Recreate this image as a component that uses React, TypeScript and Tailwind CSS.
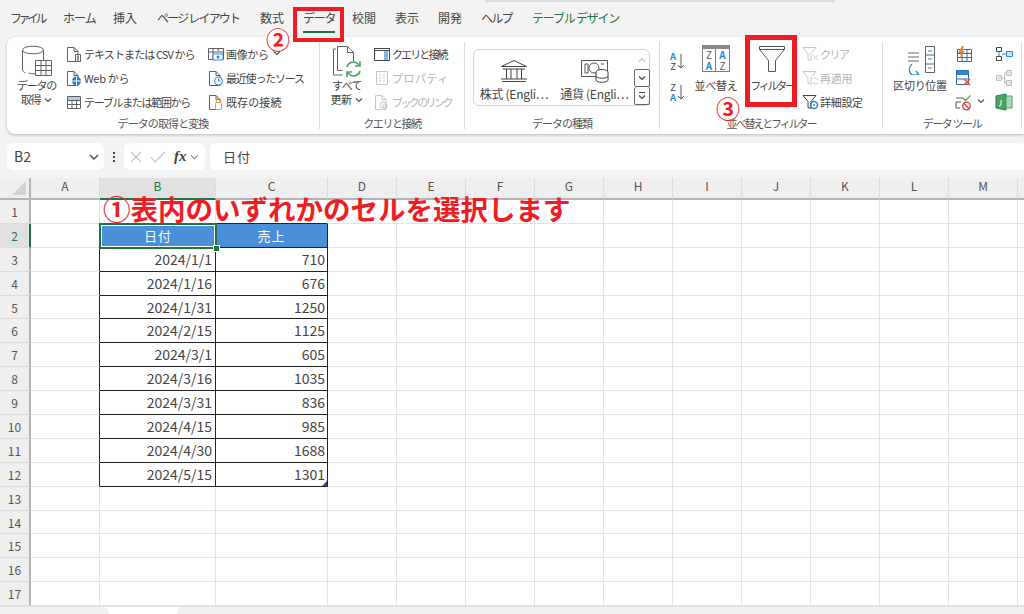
import { ReactNode } from "react";

const tabs = [
    { t: "ファイル", c: "tracking-[-3.5px]", w: "w-[53px]" },
    { t: "ホーム", c: "tracking-[-1px]", w: "w-[50px]" },
    { t: "挿入", c: "", w: "w-[44px]" },
    { t: "ページ レイアウト", c: "tracking-[-1.8px]", w: "w-[103px]" },
    { t: "数式", c: "", w: "w-[43px]" },
    { t: "データ", c: "tracking-[-1.3px]", w: "w-[49px]" },
    { t: "校閲", c: "", w: "w-[43px]" },
    { t: "表示", c: "", w: "w-[43px]" },
    { t: "開発", c: "", w: "w-[43px]" },
    { t: "ヘルプ", c: "tracking-[-1.7px]", w: "w-[51px]" },
];
const cols = ["A", "B", "C", "D", "E", "F", "G", "H", "I", "J", "K", "L", "M", ""];
const data = [
    ["2024/1/1", "710"],
    ["2024/1/16", "676"],
    ["2024/1/31", "1250"],
    ["2024/2/15", "1125"],
    ["2024/3/1", "605"],
    ["2024/3/16", "1035"],
    ["2024/3/31", "836"],
    ["2024/4/15", "985"],
    ["2024/4/30", "1688"],
    ["2024/5/15", "1301"],
];

const Svg = ({ w, h, children }: { w: number; h: number; children: ReactNode }) => (
    <svg width={w} height={h} viewBox={`0 0 ${w} ${h}`} fill="none" stroke="#606060" strokeWidth="1" className="shrink-0">
        {children}
    </svg>
);

const Doc = ({ c = "#606060" }: { c?: string }) => <path d="M1.5 1.5h6.5l4 4v10h-10.500z M8 1.500v4h4" stroke={c} />;

const Chevron = () => (
    <svg width="8" height="6" viewBox="0 0 8 6" fill="none" stroke="#555" strokeWidth="1.2" className="inline-block ml-1 mb-[2px]">
        <path d="M1 1.500l3 3 3-3" />
    </svg>
);

const Icons: Record<string, ReactNode> = {
    text: <Svg w={16} h={16}><Doc /><path d="M9.500 8.500h5v7h-5z M11 11h2M11 13h2" /></Svg>,
    web: <Svg w={16} h={16}><Doc /><circle cx="10.500" cy="11" r="4.500" fill="#2b7cd3" stroke="none" /><path d="M6 11h9M10.500 6.500v9" stroke="#fff" /></Svg>,
    table: <Svg w={16} h={16}><path d="M1.500 2.500h13v12h-13z M1.500 6.500h13M1.500 10.500h13M6 6.500v8M10.500 6.500v8" /><path d="M2 3h12v3h-12z" fill="#a8cdee" stroke="none" /></Svg>,
    image: <Svg w={16} h={16}><path d="M.5 2.500h15v11h-15z M.5 6h15M5 2.500v11M10 2.500v3" /><path d="M5 8h10v6h-10z" fill="#fff" stroke="#2b88d8" /><circle cx="10" cy="11" r="1.500" fill="#2b88d8" stroke="none" /></Svg>,
    recent: <Svg w={16} h={16}><Doc /><circle cx="10.500" cy="11" r="4" fill="#fff" stroke="#2b88d8" /><path d="M10.500 8.500v2.500h2" stroke="#2b88d8" /></Svg>,
    conn: <Svg w={16} h={16}><Doc /><rect x="7.500" y="8.500" width="6" height="7" rx="1" fill="#fff" stroke="#e8963a" /><path d="M8.500 8v-1.500a2 2 0 0 1 4 0v1.500" stroke="#e8963a" /></Svg>,
    query: <Svg w={16} h={16}><path d="M.5 2.500h15v12h-15z" stroke="#444" /><path d="M.5 2.500h15v2h-15z" stroke="#444" /><path d="M10 5h4v9h-4z" fill="#7cb8ea" stroke="none" /></Svg>,
    prop: <Svg w={16} h={16}><path d="M2.500 1.500h11v13h-11z M5 5h2M9 5h2M5 8h2M9 8h2M5 11h2M9 11h2" stroke="#c8c8c8" /></Svg>,
    link: <Svg w={16} h={16}><Doc c="#c8c8c8" /><circle cx="9" cy="11" r="3" stroke="#c8c8c8" /><circle cx="11" cy="12" r="2" stroke="#c8c8c8" /></Svg>,
    clear: <Svg w={18} h={16}><path d="M1 1.500h13l-5 6v7l-3-1v-6z" stroke="#c8c8c8" /><path d="M11 9l5 5M16 9l-5 5" stroke="#c8c8c8" /></Svg>,
    reapply: <Svg w={18} h={16}><path d="M1 1.500h13l-5 6v7l-3-1v-6z" stroke="#c8c8c8" /><path d="M11 9a3 3 0 0 1 5 1M16 13a3 3 0 0 1-5-1" stroke="#c8c8c8" /></Svg>,
    adv: <Svg w={18} h={16}><path d="M1 1.500h13l-5 6v7l-3-1v-6z" stroke="#444" /><circle cx="12" cy="11" r="3.500" stroke="#2b88d8" strokeWidth="1.600" /><circle cx="12" cy="11" r="1" fill="#2b88d8" stroke="none" /></Svg>,
    flash: <Svg w={18} h={16}><path d="M2.500 3.500h14v12h-14z M2.500 7.500h14M2.500 11.500h14M7 3.500v12M12 3.500v12" stroke="#2b6cb0" /><path d="M7 0l-4 7h3l-1 5 5-7h-3l2-5z" fill="#e8832a" stroke="none" /></Svg>,
    dedupe: <Svg w={18} h={18}><path d="M1.500 1.500h12v14h-12z" stroke="#2b6cb0" fill="#fff" /><path d="M2 2h11v4h-11z" fill="#2b88d8" stroke="none" /><path d="M2 10h11" stroke="#2b6cb0" /><path d="M9 10l6 6M15 10l-6 6" stroke="#e2504c" strokeWidth="1.500" /></Svg>,
    valid: <Svg w={18} h={18}><path d="M1 5h7M1 9h5M1 9v6h4M1 5v0" stroke="#555" /><path d="M8 5l2.500 2.500 5-5" stroke="#57a64a" strokeWidth="1.300" /><circle cx="11.500" cy="13" r="3.800" stroke="#d83b3b" strokeWidth="1.300" /><path d="M9 10.500l5 5" stroke="#d83b3b" strokeWidth="1.300" /></Svg>,
    merge: <Svg w={18} h={16}><path d="M1.500 1.500h5v4h-5zM1.500 10.500h5v4h-5z" stroke="#444" /><path d="M4 5.500v5M7 8h4" stroke="#2b88d8" /><path d="M11.500 5.500h6v5h-6z" stroke="#2b88d8" fill="#cfe4f7" /></Svg>,
    relation: <Svg w={18} h={18}><path d="M1.500 6.500h5v5h-5zM11.500 1.500h5v5h-5zM11.500 11.500h5v5h-5zM6.500 9h3M9.500 4v10h2M9.500 4h2" stroke="#c0c0c0" fill="#e6e6e6" /></Svg>,
    model: <Svg w={18} h={18}><path d="M1 3l10-2v16l-10-2z" fill="#4aa564" stroke="#2f7d49" /><path d="M11 3h6v12h-6z" fill="#a9d8b4" stroke="#4aa564" /><path d="M6 7v5l-2 1" stroke="#fff" /></Svg>,
};

const Item = ({ icon, label, off, tr = "" }: { icon: string; label: string; off?: boolean; tr?: string }) => (
    <div className={`h-[24px] flex items-center whitespace-nowrap ${off ? "text-[#b4b4b4]" : ""}`}>
        <span className="w-[18px] shrink-0 flex">{Icons[icon]}</span>
        <span className={tr}>{label}</span>
    </div>
);

const Group = ({ w, label, tr, children }: { w: string; label: string; tr: string; children: ReactNode }) => (
    <div className={`${w} my-[5px] shrink-0 flex flex-col border-r border-[#dcdcdc]`}>
        <div className="flex-1 flex min-h-0">{children}</div>
        <div className={`h-[11px] leading-[11px] text-center text-[#555] ${tr}`}>{label}</div>
    </div>
);

const BigBtn = ({ w, icon, lines, tr = "" }: { w: string; icon: ReactNode; lines: ReactNode[]; tr?: string }) => (
    <div className={`${w} shrink-0 flex flex-col items-center pt-[3px] leading-[14px] text-center`}>
        <div className="h-[33px] flex items-start justify-center">{icon}</div>
        {lines.map((l, i) => <div key={i} className={`whitespace-nowrap ${tr}`}>{l}</div>)}
    </div>
);

export default function App() {
    return (
        <div className="relative w-[1024px] h-[614px] overflow-hidden bg-[#f3f3f3] text-[#444] flex flex-col font-['Noto_Sans_CJK_JP','Noto_Sans',sans-serif] text-[11px] tracking-[-0.3px]">
            <div className="h-[2px] ml-[485px] w-[350px] bg-[#dcdcdc] shrink-0" />

            {/* tabs */}
            <div className="h-[35px] shrink-0 flex pl-[10px] text-[12px] text-[#444] tracking-normal">
                {tabs.map(({ t, c, w }) => (
                    <div key={t} className={`${w} shrink-0 h-[31px] flex items-center whitespace-nowrap`}>
                        <div className={`relative h-full flex items-center ${c}`}>
                            {t}
                            {t === "データ" && <div className="absolute left-0 right-0 bottom-0 h-[2px] bg-[#217346]" />}
                        </div>
                    </div>
                ))}
                <div className="h-[31px] flex items-center whitespace-nowrap text-[#217346] tracking-[-1.2px]">テーブル デザイン</div>
            </div>

            {/* ribbon */}
            <div className="h-[97px] ml-[7px] shrink-0 rounded-l-lg bg-white shadow-[0_1px_3px_rgba(0,0,0,0.25)] flex">
                <Group w="w-[313px]" label="データの取得と変換" tr="tracking-[-0.9px]">
                    <BigBtn
                        w="w-[59px]"
                        tr="tracking-[-1.2px]"
                        lines={["データの", <>取得<Chevron /></>]}
                        icon={
                            <Svg w={32} h={32}>
                                <path d="M1.500 5c0-5 21-5 21 0v20c0 3-10 5-15 3M1.500 5c0 5 21 5 21 0M1.500 5v20c0 1 1 2 3 3" />
                                <path d="M14.500 15.500h16v15h-16z M14.500 20.500h16M14.500 25.500h16M20 15.500v15M25 15.500v15" fill="#fff" />
                            </Svg>
                        }
                    />
                    <div className="w-[142px] shrink-0">
                        <Item icon="text" label="テキストまたは CSV から" tr="tracking-[-0.9px]" />
                        <Item icon="web" label="Web から" />
                        <Item icon="table" label="テーブルまたは範囲から" tr="tracking-[-1.3px]" />
                    </div>
                    <div>
                        <div className="h-[24px] flex items-center whitespace-nowrap">
                            <span className="w-[18px] flex">{Icons.image}</span>画像から<Chevron />
                        </div>
                        <Item icon="recent" label="最近使ったソース" tr="tracking-[-1.2px]" />
                        <Item icon="conn" label="既存の接続" tr="tracking-[0.1px]" />
                    </div>
                </Group>

                <Group w="w-[145px]" label="クエリと接続" tr="tracking-[-1.4px]">
                    <BigBtn
                        w="w-[54px]"
                        tr="tracking-[-0.6px]"
                        lines={["すべて", <>更新<Chevron /></>]}
                        icon={
                            <Svg w={30} h={32}>
                                <path d="M4 4h-2.500v26h9" />
                                <path d="M5.500 1.500h10l6 6v9M15.500 1.500v6h6M5.500 1.500v24h5" />
                                <path d="M15 22a6.500 6.500 0 0 1 11-3l2 2M28 26a6.500 6.500 0 0 1-11 3l-2-2" stroke="#4aa564" strokeWidth="1.600" />
                                <path d="M28 16v5h-5M15 32v-5h5" stroke="#4aa564" strokeWidth="1.600" />
                            </Svg>
                        }
                    />
                    <div>
                        <Item icon="query" label="クエリと接続" tr="tracking-[-1.9px]" />
                        <Item icon="prop" label="プロパティ" off tr="tracking-[0.5px]" />
                        <Item icon="link" label="ブックのリンク" off tr="tracking-[-2.6px]" />
                    </div>
                </Group>

                <Group w="w-[195px]" label="データの種類" tr="tracking-[-1px]">
                    <div className="ml-[8px] mt-[7px] w-[177px] h-[57px] rounded-md border border-[#d4d4d4] flex text-[12px] text-[#444]">
                        <div className="w-[80px] flex flex-col items-center pt-[9px]">
                            <div className="h-[26px]">
                                <Svg w={28} h={24}>
                                    <path d="M14 1.500l12.500 6h-25z M3 10h22M2 22.500h24M1 20h26M6.500 10v10M11 10v10M17 10v10M21.500 10v10" stroke="#444" />
                                </Svg>
                            </div>
                            <div className="whitespace-nowrap">株式 (Engli⋯</div>
                        </div>
                        <div className="w-[81px] flex flex-col items-center pt-[9px]">
                            <div className="h-[26px]">
                                <Svg w={30} h={24}>
                                    <path d="M1.500 1.500h26v16h-26z M5 5h3v9h-3z M21 5h3" stroke="#555" />
                                    <circle cx="14" cy="9" r="5" stroke="#555" />
                                    <ellipse cx="22" cy="13" rx="6" ry="2.500" fill="#fff" stroke="#444" />
                                    <path d="M16 13v8c0 3 12 3 12 0v-8M16 17c0 3 12 3 12 0" fill="#fff" stroke="#444" />
                                </Svg>
                            </div>
                            <div className="whitespace-nowrap">通貨 (Engli⋯</div>
                        </div>
                        <div className="w-[14px] flex flex-col text-[#555]">
                            <div className="h-[20px] flex items-center justify-center">
                                <svg width="8" height="6" viewBox="0 0 8 6" fill="none" stroke="#c4c4c4" strokeWidth="1.200"><path d="M1 4.500l3-3 3 3" /></svg>
                            </div>
                            <div className="h-[18px] border border-[#666] rounded-[2px] -mx-px flex items-center justify-center">
                                <svg width="8" height="6" viewBox="0 0 8 6" fill="none" stroke="#444" strokeWidth="1.200"><path d="M1 1.500l3 3 3-3" /></svg>
                            </div>
                            <div className="h-[19px] border border-t-0 border-[#666] rounded-[2px] -mx-px flex items-center justify-center">
                                <svg width="8" height="9" viewBox="0 0 8 9" fill="none" stroke="#444" strokeWidth="1.200"><path d="M1 1.500h6M1 4.500l3 3 3-3" /></svg>
                            </div>
                        </div>
                    </div>
                </Group>

                <Group w="w-[223px]" label="並べ替えとフィルター" tr="tracking-[-2.1px]">
                    <div className="w-[32px] shrink-0 pl-[10px] pt-[9px] flex flex-col gap-[11px]">
                        <div className="w-[20px] h-[20px] flex items-center gap-[1px] text-[9.5px] leading-[10px] text-center tracking-normal">
                            <div><div className="text-[#2b88d8] font-bold">A</div><div>Z</div></div>
                            <svg width="8" height="16" viewBox="0 0 8 16" fill="none" stroke="#555"><path d="M4 1v14M1 12l3 3 3-3" /></svg>
                        </div>
                        <div className="w-[20px] h-[20px] flex items-center gap-[1px] text-[9.5px] leading-[10px] text-center tracking-normal">
                            <div><div>Z</div><div className="text-[#2b88d8] font-bold">A</div></div>
                            <svg width="8" height="16" viewBox="0 0 8 16" fill="none" stroke="#555"><path d="M4 1v14M1 12l3 3 3-3" /></svg>
                        </div>
                    </div>
                    <BigBtn
                        w="w-[48px]"
                        lines={["並べ替え"]}
                        icon={
                            <div className="w-[28px] h-[27px] border border-[#777] border-t-[4px] border-t-[#888] grid grid-cols-2 text-[10px] leading-[11px] text-center tracking-normal text-[#555]">
                                <div className="border-r border-[#777]"><div>Z</div><div className="text-[#2b88d8] font-bold">A</div></div>
                                <div><div className="text-[#2b88d8] font-bold">A</div><div>Z</div></div>
                            </div>
                        }
                    />
                    <div className="ml-[2px] w-[60px]">
                        <BigBtn
                            w="w-[60px]"
                            tr="tracking-[-2.3px]"
                            lines={["フィルター"]}
                            icon={
                                <Svg w={28} h={28}>
                                    <path d="M1.500 1.500h25v3l-9 11v11h-7v-11l-9-11z M1.500 4.500h25" stroke="#555" fill="#fafafa" />
                                </Svg>
                            }
                        />
                    </div>
                    <div>
                        <Item icon="clear" label="クリア" off tr="tracking-[-1.5px]" />
                        <Item icon="reapply" label="再適用" off />
                        <Item icon="adv" label="詳細設定" />
                    </div>
                </Group>

                <Group w="w-[139px]" label="データ ツール" tr="tracking-[-1.4px]">
                    <div className="ml-[2px]">
                        <BigBtn
                            w="w-[70px]"
                            lines={["区切り位置"]}
                            icon={
                                <Svg w={32} h={30}>
                                    <path d="M4 8h11M4 12h11M4 16h11" />
                                    <path d="M21.500 1.500h9v26h-9z M21.500 10h9M21.500 19h9" />
                                    <path d="M24 6h4M24 14h4M24 23h4" stroke="#2b88d8" />
                                    <path d="M8 19a7 7 0 0 0 0 11M8 30h7M12 26l3 4-3 3" stroke="#2b88d8" strokeWidth="1.300" />
                                </Svg>
                            }
                        />
                    </div>
                    <div className="w-[40px] shrink-0">
                        <div className="h-[24px] flex items-center">{Icons.flash}</div>
                        <div className="h-[24px] flex items-center">{Icons.dedupe}</div>
                        <div className="h-[24px] flex items-center">{Icons.valid}<Chevron /></div>
                    </div>
                    <div>
                        <div className="h-[24px] flex items-center">{Icons.merge}</div>
                        <div className="h-[24px] flex items-center">{Icons.relation}</div>
                        <div className="h-[24px] flex items-center">{Icons.model}</div>
                    </div>
                </Group>
            </div>

            {/* formula bar */}
            <div className="h-[27px] mt-[9px] mb-[8px] shrink-0 flex items-stretch pl-[7px] gap-[5px] text-[14px] tracking-normal">
                <div className="w-[97px] rounded-md bg-white flex items-center justify-between pl-[7px] pr-[5px]">
                    B2
                    <svg width="10" height="6" viewBox="0 0 10 6" fill="none" stroke="#444" strokeWidth="1.300"><path d="M1 1l4 4 4-4" /></svg>
                </div>
                <div className="w-[10px] flex flex-col items-center justify-center gap-[2px]">
                    <div className="w-[2px] h-[2px] bg-[#444]" />
                    <div className="w-[2px] h-[2px] bg-[#444]" />
                    <div className="w-[2px] h-[2px] bg-[#444]" />
                </div>
                <div className="w-[81px] rounded-md bg-white flex items-center pl-[6px] gap-[8px]">
                    <svg width="12" height="12" viewBox="0 0 12 12" fill="none" stroke="#c4c4c4" strokeWidth="1.200"><path d="M1 1l10 10M11 1l-10 10" /></svg>
                    <svg width="16" height="12" viewBox="0 0 16 12" fill="none" stroke="#c4c4c4" strokeWidth="1.200"><path d="M1 6l4 5 10-10" /></svg>
                    <span className="font-['Liberation_Serif',serif] italic font-bold text-[15px] text-[#444]">fx</span>
                    <svg width="9" height="6" viewBox="0 0 9 6" fill="none" stroke="#888" strokeWidth="1.100" className="-ml-[5px]"><path d="M1 1l3.500 4 3.500-4" /></svg>
                </div>
                <div className="flex-1 rounded-l-md bg-white flex items-center pl-[13px] text-[#444] text-[13px] tracking-[1px]">日付</div>
            </div>

            {/* sheet */}
            <div className="grid shrink-0 grid-cols-[31px_69px_116px_112px_repeat(9,69px)_69px_8px] grid-rows-[22px_repeat(17,23.9px)] bg-white text-[14px] tracking-normal">
                <div className="bg-[#efefef] border-r-2 border-b-2 border-[#b4b4b4] flex items-end justify-end pr-[2px] pb-[2px]">
                    <svg width="16" height="16" viewBox="0 0 16 16"><path d="M15 1v14h-14z" fill="#d4d4d4" /></svg>
                </div>
                {cols.map((c, i) => (
                    <div
                        key={i}
                        className={`flex items-center justify-center text-[12px] leading-none pb-[4px] border-r border-[#dcdcdc] border-b-2 ${c === "B" ? "bg-[#e1e1e1] text-[#217346] border-b-[#217346]" : "bg-[#efefef] text-[#555] border-b-[#b4b4b4]"}`}
                    >
                        {c}
                    </div>
                ))}
                {Array.from({ length: 17 }, (_, r) => {
                    const row = r + 1;
                    const inTable = row >= 2 && row <= 12;
                    const rec = row >= 3 && row <= 12 ? data[row - 3] : null;
                    return cols.map((_c, i) => {
                        const base = "relative border-b border-r border-[#e4e4e4]";
                        const rowHead = i === 0 && (
                            <div
                                key={`h${row}`}
                                className={`flex items-center justify-center text-[12px] pt-[1px] border-b border-[#dcdcdc] border-r-2 ${row === 2 ? "bg-[#e1e1e1] text-[#217346] border-r-[#217346]" : "bg-[#efefef] text-[#555] border-r-[#b4b4b4]"}`}
                            >
                                {row}
                            </div>
                        );
                        // table cells
                        if (i === 1 && row === 2) {
                            return [rowHead, (
                                <div key={`${row}-${i}`} className="relative bg-[#4a90d9] flex items-center justify-center text-white text-[13px] tracking-[1px]">
                                    日付
                                    <div className="absolute -inset-[1px] border-2 border-[#217346] shadow-[inset_0_0_0_1px_#fff] z-10" />
                                    <div className="absolute -right-[4px] -bottom-[4px] w-[7px] h-[7px] bg-[#217346] border border-white z-20" />
                                </div>
                            )];
                        }
                        if (i === 2 && row === 2) {
                            return <div key={`${row}-${i}`} className="bg-[#4a90d9] border-r border-b border-[#222] flex items-center justify-center text-white text-[13px] tracking-[1px]">売上</div>;
                        }
                        if (rec && i === 1) {
                            return <div key={`${row}-${i}`} className="border-r border-b border-[#222] flex items-center justify-end pr-[3px] text-[#444]">{rec[0]}</div>;
                        }
                        if (rec && i === 2) {
                            return (
                                <div key={`${row}-${i}`} className="relative border-r border-b border-[#222] flex items-center justify-end pr-[2px] text-[#444]">
                                    {rec[1]}
                                    {row === 12 && (
                                        <svg width="5" height="5" viewBox="0 0 5 5" className="absolute right-0 bottom-0">
                                            <path d="M5 0v5h-5z" fill="#2a3fa0" />
                                        </svg>
                                    )}
                                </div>
                            );
                        }
                        if (i === 0 && inTable) {
                            return [rowHead, <div key={`${row}-${i}`} className="border-b border-r border-r-[#222] border-b-[#e4e4e4]" />];
                        }
                        if (i === 1 && row === 1) return <div key={`${row}-${i}`} className="border-r border-b border-b-[#222] border-r-[#e4e4e4]" />;
                        if (i === 2 && row === 1) return <div key={`${row}-${i}`} className="border-r border-b border-b-[#222] border-r-[#e4e4e4]" />;
                        return [rowHead, <div key={`${row}-${i}`} className={base} />];
                    });
                })}
            </div>

            {/* sheet tabs */}
            <div className="flex-1 flex gap-[1px] border-t border-[#e0e0e0] bg-white">
                <div className="w-[109px] bg-[#f0f0f0] rounded-tr-md" />
                <div className="w-[66px] bg-white" />
                <div className="flex-1 bg-[#f0f0f0] rounded-tl-md" />
            </div>

            {/* annotations */}
            <div className="absolute left-[293px] top-[7px] w-[51px] h-[35px] border-[4px] border-[#ee1c25]" />
            <div className="absolute left-[745px] top-[35px] w-[52px] h-[72px] border-[5px] border-[#ee1c25]" />
            <div className="absolute left-[266px] top-[27px] w-[24px] h-[24px] rounded-full bg-white flex items-center justify-center text-[#ee1c25] font-bold text-[24px] leading-none tracking-normal">②</div>
            <div className="absolute left-[716px] top-[96px] w-[24px] h-[24px] rounded-full bg-white flex items-center justify-center text-[#ee1c25] font-bold text-[24px] leading-none tracking-normal">③</div>
            <div className="absolute left-[103px] top-[195px] whitespace-nowrap text-[#ee1c25] font-bold text-[27.5px] leading-[26px] tracking-normal">①表内のいずれかのセルを選択します</div>
        </div>
    );
}
